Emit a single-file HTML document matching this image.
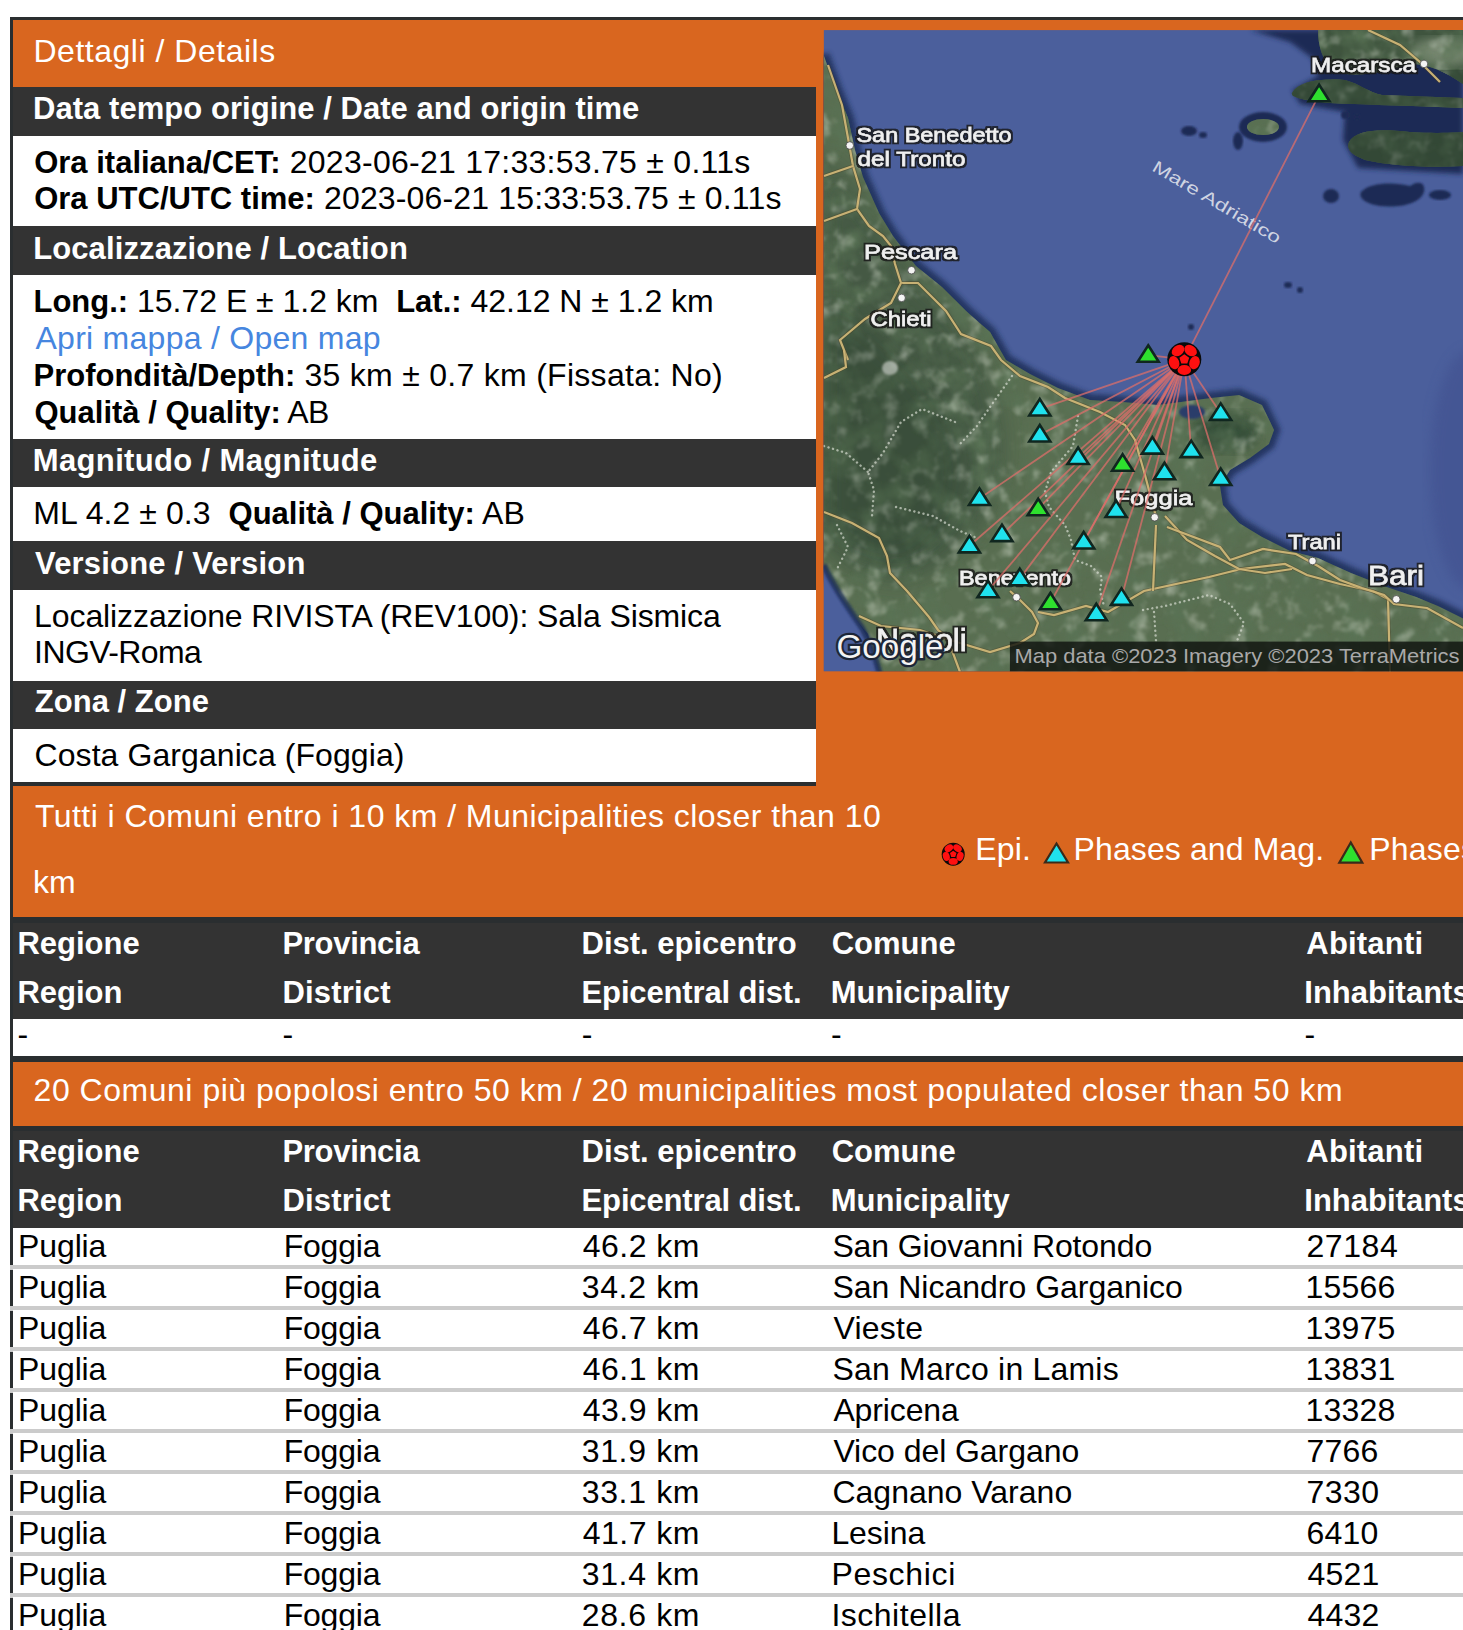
<!DOCTYPE html><html><head><meta charset="utf-8"><style>*{margin:0;padding:0}
html,body{width:1463px;height:1630px;overflow:hidden;background:#fff}
body{position:relative;font-family:"Liberation Sans",sans-serif}
div{position:absolute}
.t{white-space:pre;font-size:32px;line-height:32px}
</style></head><body>
<div style="left:10px;top:17px;width:1500px;height:1700px;background:#d9661f;border-left:3.5px solid #2a2e30;border-top:3.5px solid #2a2e30;box-sizing:border-box"></div>
<div style="left:13.0px;top:87.3px;width:802.5px;height:49.5px;background:#333333;"></div>
<div style="left:13.0px;top:136px;width:802.5px;height:90.6px;background:#fff;"></div>
<div style="left:13.0px;top:225.8px;width:802.5px;height:49.699999999999996px;background:#333333;"></div>
<div style="left:13.0px;top:274.7px;width:802.5px;height:164.70000000000002px;background:#fff;"></div>
<div style="left:13.0px;top:438.6px;width:802.5px;height:49.5px;background:#333333;"></div>
<div style="left:13.0px;top:487.3px;width:802.5px;height:54.4px;background:#fff;"></div>
<div style="left:13.0px;top:540.9px;width:802.5px;height:49.5px;background:#333333;"></div>
<div style="left:13.0px;top:589.6px;width:802.5px;height:91.7px;background:#fff;"></div>
<div style="left:13.0px;top:680.5px;width:802.5px;height:49.099999999999994px;background:#333333;"></div>
<div style="left:13.0px;top:728.8px;width:802.5px;height:54.3px;background:#fff;"></div>
<div style="left:13.0px;top:782.3px;width:802.5px;height:3.7px;background:#2a2e30;"></div>
<div style="left:13.0px;top:917.4px;width:1500px;height:102.3px;background:#333333;"></div>
<div style="left:13.0px;top:917.4px;width:1500px;height:5.8px;background:#2a2e30;"></div>
<div style="left:13.0px;top:1018.9px;width:1500px;height:37.9px;background:#fff;"></div>
<div style="left:13.0px;top:1056px;width:1500px;height:5.7px;background:#2a2e30;"></div>
<div style="left:13.0px;top:1125.5px;width:1500px;height:102.3px;background:#333333;"></div>
<div style="left:13.0px;top:1125.5px;width:1500px;height:5.8px;background:#2a2e30;"></div>
<div style="left:13.0px;top:1227.7px;width:1500px;height:41.8px;background:#fff;"></div>
<div style="left:10px;top:1265.0px;width:1500px;height:4.5px;background:#cbcbcb;"></div>
<div style="left:13.0px;top:1268.7px;width:1500px;height:41.8px;background:#fff;"></div>
<div style="left:10px;top:1306.0px;width:1500px;height:4.5px;background:#cbcbcb;"></div>
<div style="left:13.0px;top:1309.7px;width:1500px;height:41.8px;background:#fff;"></div>
<div style="left:10px;top:1347.0px;width:1500px;height:4.5px;background:#cbcbcb;"></div>
<div style="left:13.0px;top:1350.7px;width:1500px;height:41.8px;background:#fff;"></div>
<div style="left:10px;top:1388.0px;width:1500px;height:4.5px;background:#cbcbcb;"></div>
<div style="left:13.0px;top:1391.7px;width:1500px;height:41.8px;background:#fff;"></div>
<div style="left:10px;top:1429.0px;width:1500px;height:4.5px;background:#cbcbcb;"></div>
<div style="left:13.0px;top:1432.7px;width:1500px;height:41.8px;background:#fff;"></div>
<div style="left:10px;top:1470.0px;width:1500px;height:4.5px;background:#cbcbcb;"></div>
<div style="left:13.0px;top:1473.7px;width:1500px;height:41.8px;background:#fff;"></div>
<div style="left:10px;top:1511.0px;width:1500px;height:4.5px;background:#cbcbcb;"></div>
<div style="left:13.0px;top:1514.7px;width:1500px;height:41.8px;background:#fff;"></div>
<div style="left:10px;top:1552.0px;width:1500px;height:4.5px;background:#cbcbcb;"></div>
<div style="left:13.0px;top:1555.7px;width:1500px;height:41.8px;background:#fff;"></div>
<div style="left:10px;top:1593.0px;width:1500px;height:4.5px;background:#cbcbcb;"></div>
<div style="left:13.0px;top:1596.7px;width:1500px;height:41.8px;background:#fff;"></div>
<div style="left:10px;top:1634.0px;width:1500px;height:4.5px;background:#cbcbcb;"></div>
<div style="left:13.0px;top:1637.7px;width:1500px;height:41.8px;background:#fff;"></div>
<div style="left:10px;top:1675.0px;width:1500px;height:4.5px;background:#cbcbcb;"></div>
<svg style="position:absolute;left:0;top:0" width="1463" height="1630" viewBox="0 0 1463 1630">
<defs>
<clipPath id="mc"><rect x="823.6" y="30.1" width="646.4" height="641.1999999999999"/></clipPath>
<filter id="blur1"><feGaussianBlur stdDeviation="1.2"/></filter>
<filter id="blur2"><feGaussianBlur stdDeviation="2.5"/></filter>
<filter id="blur6"><feGaussianBlur stdDeviation="6"/></filter>
<filter id="blur12" x="-50%" y="-50%" width="200%" height="200%"><feGaussianBlur stdDeviation="12"/></filter>
<filter id="halo" x="-10%" y="-30%" width="120%" height="160%"><feMorphology in="SourceAlpha" operator="dilate" radius="1.7" result="d"/><feFlood flood-color="#161616" flood-opacity="0.85"/><feComposite in2="d" operator="in" result="h"/><feMerge><feMergeNode in="h"/><feMergeNode in="SourceGraphic"/></feMerge></filter>
<filter id="texd" x="0" y="0" width="100%" height="100%" filterUnits="userSpaceOnUse"><feTurbulence type="fractalNoise" baseFrequency="0.035" numOctaves="4" seed="7"/><feColorMatrix values="0 0 0 0 0.10  0 0 0 0 0.17  0 0 0 0 0.09  2.4 0 0 0 -1.0"/><feGaussianBlur stdDeviation="0.8"/></filter>
<filter id="texl" x="0" y="0" width="100%" height="100%" filterUnits="userSpaceOnUse"><feTurbulence type="fractalNoise" baseFrequency="0.06" numOctaves="3" seed="19"/><feColorMatrix values="0 0 0 0 0.72  0 0 0 0 0.76  0 0 0 0 0.66  0 1.4 0 0 -0.74"/><feGaussianBlur stdDeviation="1.2"/></filter>
<clipPath id="landclip"><polygon points="823.6,55 836,89 848,118 855,150 863,177 879,213 893,236 916,266 942,287 966,311 990,332 1006,360 1030,374 1058,388 1090,400 1123,402 1158,405 1181,402 1211,398 1239,395 1262,405 1274,430 1269,444 1250,458 1230,470 1220,486 1223,505 1239,523 1262,537 1290,551 1318,558 1351,573 1384,586 1416,597 1438,606 1470,622 1470,680 880,680 868,634 846,608 823.6,569"/><path d="M1318,30 L1463,30 L1463,84 C1445,72 1430,64 1410,64 C1390,70 1370,76 1345,74 C1325,70 1318,50 1318,30 Z"/><path d="M1292,93 C1298,82 1318,78 1345,80 C1360,84 1368,92 1382,95 L1463,98 L1463,108 C1420,106 1370,105 1330,103 C1310,101 1290,98 1292,93 Z"/><path d="M1349,142 C1355,130 1380,128 1410,132 C1440,134 1463,132 1463,132 L1463,166 C1430,168 1390,166 1365,160 C1352,155 1346,150 1349,142 Z"/><ellipse cx="1263" cy="127" rx="16" ry="8"/></clipPath>
</defs>
<g clip-path="url(#mc)">
<rect x="823.6" y="30.1" width="646.4" height="641.1999999999999" fill="#4b5f9c"/>
<ellipse cx="1470" cy="470" rx="40" ry="120" fill="#3f508e" opacity="0.55" filter="url(#blur6)"/>
<polygon points="823.6,55 836,89 848,118 855,150 863,177 879,213 893,236 916,266 942,287 966,311 990,332 1006,360 1030,374 1058,388 1090,400 1123,402 1158,405 1181,402 1211,398 1239,395 1262,405 1274,430 1269,444 1250,458 1230,470 1220,486 1223,505 1239,523 1262,537 1290,551 1318,558 1351,573 1384,586 1416,597 1438,606 1470,622 1470,680 880,680 868,634 846,608 823.6,569" fill="#1f2d58" stroke="#1f2d58" stroke-width="12" filter="url(#blur2)" opacity="0.85"/>
<path d="M1250,30 L1290,42 L1312,58 L1318,76 L1292,90 L1300,104 L1345,112 L1343,140 L1358,168 L1463,174 L1463,30 Z" fill="#1e2b55" filter="url(#blur2)"/>
<ellipse cx="1263" cy="127" rx="24" ry="15" fill="#1e2b55" filter="url(#blur1)"/>
<ellipse cx="1238" cy="141" rx="5" ry="9" fill="#1e2b55" filter="url(#blur1)"/>
<ellipse cx="1345" cy="115" rx="4" ry="4" fill="#1e2b55" filter="url(#blur1)"/>
<ellipse cx="1357" cy="117" rx="3" ry="3" fill="#1e2b55" filter="url(#blur1)"/>
<ellipse cx="1331" cy="196" rx="8" ry="7" fill="#1e2b55" filter="url(#blur1)"/>
<ellipse cx="1440" cy="195" rx="11" ry="5" fill="#1e2b55" filter="url(#blur1)"/>
<ellipse cx="1288" cy="285" rx="4" ry="3" fill="#1e2b55" filter="url(#blur1)"/>
<ellipse cx="1300" cy="290" rx="3" ry="3" fill="#1e2b55" filter="url(#blur1)"/>
<ellipse cx="1191" cy="327" rx="3" ry="3" fill="#1e2b55" filter="url(#blur1)"/>
<ellipse cx="1189" cy="131" rx="8" ry="5" fill="#1e2b55" filter="url(#blur1)"/>
<ellipse cx="1203" cy="135" rx="4" ry="3" fill="#1e2b55" filter="url(#blur1)"/>
<path d="M1361,192 C1370,182 1395,182 1410,186 C1418,180 1426,182 1424,192 C1420,204 1400,208 1380,206 C1366,204 1358,198 1361,192 Z" fill="#1e2b55" filter="url(#blur1)"/>
<g clip-path="url(#landclip)">
<rect x="823.6" y="30.1" width="646.4" height="641.1999999999999" fill="#596e51"/>
<path d="M823.6,150 C860,200 900,260 940,300 C990,350 1010,420 1000,480 C985,530 950,570 900,580 C860,575 840,560 823.6,540 Z" fill="#34493a" opacity="0.55" filter="url(#blur12)"/>
<ellipse cx="1225" cy="432" rx="34" ry="20" fill="#2a4530" opacity="0.7" filter="url(#blur6)"/>
<rect x="1290" y="30" width="180" height="150" fill="#2e4232" opacity="0.6"/>
<ellipse cx="1445" cy="52" rx="36" ry="14" fill="#9aa890" opacity="0.6" filter="url(#blur6)"/>
<rect x="823.6" y="30.1" width="646.4" height="641.1999999999999" filter="url(#texd)"/>
<rect x="823.6" y="30.1" width="646.4" height="641.1999999999999" filter="url(#texl)"/>
<ellipse cx="890" cy="368" rx="8" ry="7" fill="#d8dcd4" opacity="0.8" filter="url(#blur1)"/>
<rect x="1290" y="70" width="180" height="110" fill="#24382a" opacity="0.4"/>
<path d="M823.6,300 C870,330 920,380 950,430 C970,480 950,540 900,560 C860,560 830,540 823.6,520 Z" fill="#1f3322" opacity="0.25" filter="url(#blur12)"/>
</g>
<ellipse cx="1192" cy="412" rx="13" ry="7" fill="#2b3e6a" filter="url(#blur1)"/>
<path d="M823.6,565 C835,590 850,610 862,628 C872,645 876,660 880,675 L823.6,675 Z" fill="#4b5f9c"/>
<path d="M823.6,565 C835,590 850,610 862,628 C872,645 876,660 880,675" fill="none" stroke="#1f2d58" stroke-width="6" filter="url(#blur1)" opacity="0.8"/>
<path d="M828,65 L842,105 L848,138 L853,166 L860,189 L857,209 L869,226 L883,236 L891,246 L895,264 L901,283 L918,283 L946,311 L961,334 L991,346 L1001,360 L1020,376 L1048,387 L1065,398 L1100,412 L1125,425 L1135,440 L1145,475 L1156,517" fill="none" stroke="#4a3d20" stroke-width="3.8" opacity="0.35"/>
<path d="M828,65 L842,105 L848,138 L853,166 L860,189 L857,209 L869,226 L883,236 L891,246 L895,264 L901,283 L918,283 L946,311 L961,334 L991,346 L1001,360 L1020,376 L1048,387 L1065,398 L1100,412 L1125,425 L1135,440 L1145,475 L1156,517" fill="none" stroke="#cfb677" stroke-width="2.2" opacity="0.95"/>
<path d="M853,166 L824,176" fill="none" stroke="#4a3d20" stroke-width="3.8" opacity="0.35"/>
<path d="M853,166 L824,176" fill="none" stroke="#cfb677" stroke-width="2.2" opacity="0.95"/>
<path d="M857,209 L824,221" fill="none" stroke="#4a3d20" stroke-width="3.8" opacity="0.35"/>
<path d="M857,209 L824,221" fill="none" stroke="#cfb677" stroke-width="2.2" opacity="0.95"/>
<path d="M901,283 L891,303 L865,319 L840,340 L848,360" fill="none" stroke="#4a3d20" stroke-width="3.8" opacity="0.35"/>
<path d="M901,283 L891,303 L865,319 L840,340 L848,360" fill="none" stroke="#cfb677" stroke-width="2.2" opacity="0.95"/>
<path d="M844,350 L846,367 L824,378" fill="none" stroke="#4a3d20" stroke-width="3.8" opacity="0.35"/>
<path d="M844,350 L846,367 L824,378" fill="none" stroke="#cfb677" stroke-width="2.2" opacity="0.95"/>
<path d="M824,512 L852,523 L879,538 L887,556 L890,573 L907,591 L929,617 L938,630 L947,637 L960,672" fill="none" stroke="#4a3d20" stroke-width="3.8" opacity="0.35"/>
<path d="M824,512 L852,523 L879,538 L887,556 L890,573 L907,591 L929,617 L938,630 L947,637 L960,672" fill="none" stroke="#cfb677" stroke-width="2.2" opacity="0.95"/>
<path d="M859,616 L881,626 L920,630 L950,640 L990,652 L1020,643 L1034,634 L1038,623 L1032,612 L1021,601 L1010,591" fill="none" stroke="#4a3d20" stroke-width="3.8" opacity="0.35"/>
<path d="M859,616 L881,626 L920,630 L950,640 L990,652 L1020,643 L1034,634 L1038,623 L1032,612 L1021,601 L1010,591" fill="none" stroke="#cfb677" stroke-width="2.2" opacity="0.95"/>
<path d="M1038,612 L1054,615 L1086,606 L1108,612 L1144,591 L1176,584 L1209,577 L1241,569 L1285,564 L1307,575 L1340,584 L1373,591 L1388,599 L1390,672" fill="none" stroke="#4a3d20" stroke-width="3.8" opacity="0.35"/>
<path d="M1038,612 L1054,615 L1086,606 L1108,612 L1144,591 L1176,584 L1209,577 L1241,569 L1285,564 L1307,575 L1340,584 L1373,591 L1388,599 L1390,672" fill="none" stroke="#cfb677" stroke-width="2.2" opacity="0.95"/>
<path d="M1156,525 L1153,591" fill="none" stroke="#4a3d20" stroke-width="3.8" opacity="0.35"/>
<path d="M1156,525 L1153,591" fill="none" stroke="#cfb677" stroke-width="2.2" opacity="0.95"/>
<path d="M1165,516 L1187,540 L1215,556 L1239,569 L1265,573 L1292,569" fill="none" stroke="#4a3d20" stroke-width="3.8" opacity="0.35"/>
<path d="M1165,516 L1187,540 L1215,556 L1239,569 L1265,573 L1292,569" fill="none" stroke="#cfb677" stroke-width="2.2" opacity="0.95"/>
<path d="M1167,527 L1220,547 L1230,560 L1263,549 L1296,554 L1318,566 L1340,580 L1362,588 L1384,595 L1394,604 L1427,608 L1463,628" fill="none" stroke="#4a3d20" stroke-width="3.8" opacity="0.35"/>
<path d="M1167,527 L1220,547 L1230,560 L1263,549 L1296,554 L1318,566 L1340,580 L1362,588 L1384,595 L1394,604 L1427,608 L1463,628" fill="none" stroke="#cfb677" stroke-width="2.2" opacity="0.95"/>
<path d="M1368,30 L1400,45 L1420,62 L1430,72 L1440,82" fill="none" stroke="#4a3d20" stroke-width="3.8" opacity="0.35"/>
<path d="M1368,30 L1400,45 L1420,62 L1430,72 L1440,82" fill="none" stroke="#cfb677" stroke-width="2.2" opacity="0.95"/>
<path d="M1012,376 L990,407 L977,426 L960,444" fill="none" stroke="#dfe3d8" stroke-width="2.4" stroke-dasharray="0.1,4.6" stroke-linecap="round" opacity="0.65"/>
<path d="M955,422 L922,409 L901,422 L883,453 L868,472 L874,490 L872,516" fill="none" stroke="#dfe3d8" stroke-width="2.4" stroke-dasharray="0.1,4.6" stroke-linecap="round" opacity="0.65"/>
<path d="M824,446 L846,453 L868,472" fill="none" stroke="#dfe3d8" stroke-width="2.4" stroke-dasharray="0.1,4.6" stroke-linecap="round" opacity="0.65"/>
<path d="M896,507 L933,516 L960,531 L977,538" fill="none" stroke="#dfe3d8" stroke-width="2.4" stroke-dasharray="0.1,4.6" stroke-linecap="round" opacity="0.65"/>
<path d="M1078,416 L1073,446 L1051,472 L1045,492 L1049,507 L1065,525 L1071,540 L1075,560 L1091,566 L1102,577 L1100,591 L1104,606" fill="none" stroke="#dfe3d8" stroke-width="2.4" stroke-dasharray="0.1,4.6" stroke-linecap="round" opacity="0.65"/>
<path d="M837,525 L848,547 L837,569" fill="none" stroke="#dfe3d8" stroke-width="2.4" stroke-dasharray="0.1,4.6" stroke-linecap="round" opacity="0.65"/>
<path d="M1143,610 L1165,606 L1209,595 L1230,604 L1244,623 L1237,641" fill="none" stroke="#dfe3d8" stroke-width="2.4" stroke-dasharray="0.1,4.6" stroke-linecap="round" opacity="0.65"/>
<path d="M1154,612 L1156,641" fill="none" stroke="#dfe3d8" stroke-width="2.4" stroke-dasharray="0.1,4.6" stroke-linecap="round" opacity="0.65"/>
<circle cx="849.8" cy="145.5" r="3.8" fill="#f4f4f4" stroke="#444" stroke-width="0.8"/>
<circle cx="911.5" cy="270.2" r="3.8" fill="#f4f4f4" stroke="#444" stroke-width="0.8"/>
<circle cx="901.6" cy="297.9" r="3.8" fill="#f4f4f4" stroke="#444" stroke-width="0.8"/>
<circle cx="1424" cy="63.9" r="3.8" fill="#f4f4f4" stroke="#444" stroke-width="0.8"/>
<circle cx="1154.7" cy="517.3" r="3.8" fill="#f4f4f4" stroke="#444" stroke-width="0.8"/>
<circle cx="1312.5" cy="561" r="3.8" fill="#f4f4f4" stroke="#444" stroke-width="0.8"/>
<circle cx="1396.3" cy="599.3" r="3.8" fill="#f4f4f4" stroke="#444" stroke-width="0.8"/>
<circle cx="1016.5" cy="597.2" r="3.8" fill="#f4f4f4" stroke="#444" stroke-width="0.8"/>
<text x="856.5" y="141.5" font-size="21" font-weight="normal" fill="#f0f0f0" stroke="#f0f0f0" stroke-width="0.5" filter="url(#halo)" textLength="155" lengthAdjust="spacingAndGlyphs">San Benedetto</text>
<text x="857.5" y="165.6" font-size="21" font-weight="normal" fill="#f0f0f0" stroke="#f0f0f0" stroke-width="0.5" filter="url(#halo)" textLength="108" lengthAdjust="spacingAndGlyphs">del Tronto</text>
<text x="864" y="258.6" font-size="21" font-weight="normal" fill="#f0f0f0" stroke="#f0f0f0" stroke-width="0.5" filter="url(#halo)" textLength="93" lengthAdjust="spacingAndGlyphs">Pescara</text>
<text x="870.5" y="326.4" font-size="21" font-weight="normal" fill="#f0f0f0" stroke="#f0f0f0" stroke-width="0.5" filter="url(#halo)" textLength="61" lengthAdjust="spacingAndGlyphs">Chieti</text>
<text x="1311" y="71.6" font-size="21" font-weight="normal" fill="#f0f0f0" stroke="#f0f0f0" stroke-width="0.5" filter="url(#halo)" textLength="105" lengthAdjust="spacingAndGlyphs">Macarsca</text>
<text x="1114.5" y="504.5" font-size="21" font-weight="normal" fill="#f0f0f0" stroke="#f0f0f0" stroke-width="0.5" filter="url(#halo)" textLength="78" lengthAdjust="spacingAndGlyphs">Foggia</text>
<text x="1288" y="549" font-size="21" font-weight="normal" fill="#f0f0f0" stroke="#f0f0f0" stroke-width="0.5" filter="url(#halo)" textLength="53" lengthAdjust="spacingAndGlyphs">Trani</text>
<text x="1368" y="585.1" font-size="28" font-weight="normal" fill="#f0f0f0" stroke="#f0f0f0" stroke-width="0.5" filter="url(#halo)" textLength="56" lengthAdjust="spacingAndGlyphs">Bari</text>
<text x="959" y="585.1" font-size="19.5" font-weight="normal" fill="#f0f0f0" stroke="#f0f0f0" stroke-width="0.5" filter="url(#halo)" textLength="112" lengthAdjust="spacingAndGlyphs">Benevento</text>
<text x="876" y="651.4" font-size="31" font-weight="normal" fill="#f0f0f0" stroke="#f0f0f0" stroke-width="0.5" filter="url(#halo)" textLength="91" lengthAdjust="spacingAndGlyphs">Napoli</text>
<text x="1151" y="170" font-size="17" fill="#cfd4e2" transform="rotate(30.6 1151 170)" textLength="146" lengthAdjust="spacingAndGlyphs">Mare Adriatico</text>
<line x1="1184.3" y1="359.3" x2="1039.8" y2="408.9" stroke="#dc6e6a" stroke-width="1.8" opacity="0.75"/>
<line x1="1184.3" y1="359.3" x2="1039.8" y2="434.9" stroke="#dc6e6a" stroke-width="1.8" opacity="0.75"/>
<line x1="1184.3" y1="359.3" x2="1078.1" y2="457.4" stroke="#dc6e6a" stroke-width="1.8" opacity="0.75"/>
<line x1="1184.3" y1="359.3" x2="1152.4" y2="447.0" stroke="#dc6e6a" stroke-width="1.8" opacity="0.75"/>
<line x1="1184.3" y1="359.3" x2="1164.5" y2="472.6" stroke="#dc6e6a" stroke-width="1.8" opacity="0.75"/>
<line x1="1184.3" y1="359.3" x2="1191.2" y2="450.5" stroke="#dc6e6a" stroke-width="1.8" opacity="0.75"/>
<line x1="1184.3" y1="359.3" x2="1220.7" y2="413.3" stroke="#dc6e6a" stroke-width="1.8" opacity="0.75"/>
<line x1="1184.3" y1="359.3" x2="1220.7" y2="478.4" stroke="#dc6e6a" stroke-width="1.8" opacity="0.75"/>
<line x1="1184.3" y1="359.3" x2="979.5" y2="498.4" stroke="#dc6e6a" stroke-width="1.8" opacity="0.75"/>
<line x1="1184.3" y1="359.3" x2="1002.0" y2="534.5" stroke="#dc6e6a" stroke-width="1.8" opacity="0.75"/>
<line x1="1184.3" y1="359.3" x2="969.4" y2="545.8" stroke="#dc6e6a" stroke-width="1.8" opacity="0.75"/>
<line x1="1184.3" y1="359.3" x2="1083.7" y2="541.9" stroke="#dc6e6a" stroke-width="1.8" opacity="0.75"/>
<line x1="1184.3" y1="359.3" x2="1116.1" y2="510.4" stroke="#dc6e6a" stroke-width="1.8" opacity="0.75"/>
<line x1="1184.3" y1="359.3" x2="1019.8" y2="578.6" stroke="#dc6e6a" stroke-width="1.8" opacity="0.75"/>
<line x1="1184.3" y1="359.3" x2="988.0" y2="590.7" stroke="#dc6e6a" stroke-width="1.8" opacity="0.75"/>
<line x1="1184.3" y1="359.3" x2="1096.3" y2="613.6" stroke="#dc6e6a" stroke-width="1.8" opacity="0.75"/>
<line x1="1184.3" y1="359.3" x2="1121.5" y2="598.3" stroke="#dc6e6a" stroke-width="1.8" opacity="0.75"/>
<line x1="1184.3" y1="359.3" x2="1148.2" y2="355.2" stroke="#dc6e6a" stroke-width="1.8" opacity="0.75"/>
<line x1="1184.3" y1="359.3" x2="1122.6" y2="464.1" stroke="#dc6e6a" stroke-width="1.8" opacity="0.75"/>
<line x1="1184.3" y1="359.3" x2="1038.2" y2="508.6" stroke="#dc6e6a" stroke-width="1.8" opacity="0.75"/>
<line x1="1184.3" y1="359.3" x2="1050.4" y2="602.7" stroke="#dc6e6a" stroke-width="1.8" opacity="0.75"/>
<line x1="1184.3" y1="359.3" x2="1319.1" y2="94.6" stroke="#dc6e6a" stroke-width="1.8" opacity="0.75"/>
<polygon points="1039.8,399.0 1050.3,415.5 1029.3,415.5" fill="#1fe2ee" stroke="#10261f" stroke-width="2.6" stroke-linejoin="miter"/>
<polygon points="1039.8,425.0 1050.3,441.5 1029.3,441.5" fill="#1fe2ee" stroke="#10261f" stroke-width="2.6" stroke-linejoin="miter"/>
<polygon points="1078.1,447.5 1088.6,464.0 1067.6,464.0" fill="#1fe2ee" stroke="#10261f" stroke-width="2.6" stroke-linejoin="miter"/>
<polygon points="1152.4,437.1 1162.9,453.6 1141.9,453.6" fill="#1fe2ee" stroke="#10261f" stroke-width="2.6" stroke-linejoin="miter"/>
<polygon points="1164.5,462.7 1175.0,479.2 1154.0,479.2" fill="#1fe2ee" stroke="#10261f" stroke-width="2.6" stroke-linejoin="miter"/>
<polygon points="1191.2,440.6 1201.7,457.1 1180.7,457.1" fill="#1fe2ee" stroke="#10261f" stroke-width="2.6" stroke-linejoin="miter"/>
<polygon points="1220.7,403.4 1231.2,419.9 1210.2,419.9" fill="#1fe2ee" stroke="#10261f" stroke-width="2.6" stroke-linejoin="miter"/>
<polygon points="1220.7,468.5 1231.2,485.0 1210.2,485.0" fill="#1fe2ee" stroke="#10261f" stroke-width="2.6" stroke-linejoin="miter"/>
<polygon points="979.5,488.5 990.0,505.0 969.0,505.0" fill="#1fe2ee" stroke="#10261f" stroke-width="2.6" stroke-linejoin="miter"/>
<polygon points="1002.0,524.6 1012.5,541.1 991.5,541.1" fill="#1fe2ee" stroke="#10261f" stroke-width="2.6" stroke-linejoin="miter"/>
<polygon points="969.4,535.9 979.9,552.4 958.9,552.4" fill="#1fe2ee" stroke="#10261f" stroke-width="2.6" stroke-linejoin="miter"/>
<polygon points="1083.7,532.0 1094.2,548.5 1073.2,548.5" fill="#1fe2ee" stroke="#10261f" stroke-width="2.6" stroke-linejoin="miter"/>
<polygon points="1116.1,500.5 1126.6,517.0 1105.6,517.0" fill="#1fe2ee" stroke="#10261f" stroke-width="2.6" stroke-linejoin="miter"/>
<polygon points="1019.8,568.7 1030.3,585.2 1009.3,585.2" fill="#1fe2ee" stroke="#10261f" stroke-width="2.6" stroke-linejoin="miter"/>
<polygon points="988.0,580.8 998.5,597.3 977.5,597.3" fill="#1fe2ee" stroke="#10261f" stroke-width="2.6" stroke-linejoin="miter"/>
<polygon points="1096.3,603.7 1106.8,620.2 1085.8,620.2" fill="#1fe2ee" stroke="#10261f" stroke-width="2.6" stroke-linejoin="miter"/>
<polygon points="1121.5,588.4 1132.0,604.9 1111.0,604.9" fill="#1fe2ee" stroke="#10261f" stroke-width="2.6" stroke-linejoin="miter"/>
<polygon points="1148.2,345.3 1158.7,361.8 1137.7,361.8" fill="#2ee02e" stroke="#10261f" stroke-width="2.6" stroke-linejoin="miter"/>
<polygon points="1122.6,454.2 1133.1,470.7 1112.1,470.7" fill="#2ee02e" stroke="#10261f" stroke-width="2.6" stroke-linejoin="miter"/>
<polygon points="1038.2,498.7 1048.7,515.2 1027.7,515.2" fill="#2ee02e" stroke="#10261f" stroke-width="2.6" stroke-linejoin="miter"/>
<polygon points="1050.4,592.8 1060.9,609.3 1039.9,609.3" fill="#2ee02e" stroke="#10261f" stroke-width="2.6" stroke-linejoin="miter"/>
<polygon points="1319.1,84.7 1329.6,101.2 1308.6,101.2" fill="#2ee02e" stroke="#10261f" stroke-width="2.6" stroke-linejoin="miter"/>
<circle cx="1184.3" cy="359.3" r="17" fill="#0a0a0a"/><polygon points="1184.3,354.2 1179.4,357.7 1181.3,363.4 1187.3,363.4 1189.2,357.7" fill="#ff1010"/><ellipse cx="1184.3" cy="370.0" rx="6.8" ry="5.1" transform="rotate(180 1184.3 370.0)" fill="#ff1010"/><ellipse cx="1174.1" cy="362.6" rx="6.8" ry="5.1" transform="rotate(252 1174.1 362.6)" fill="#ff1010"/><ellipse cx="1178.0" cy="350.6" rx="6.8" ry="5.1" transform="rotate(324 1178.0 350.6)" fill="#ff1010"/><ellipse cx="1190.6" cy="350.6" rx="6.8" ry="5.1" transform="rotate(396 1190.6 350.6)" fill="#ff1010"/><ellipse cx="1194.5" cy="362.6" rx="6.8" ry="5.1" transform="rotate(468 1194.5 362.6)" fill="#ff1010"/>
<text x="836.5" y="658" font-size="33" font-weight="normal" fill="#f4f4f4" stroke="#1d2638" stroke-width="4.5" paint-order="stroke" textLength="107" lengthAdjust="spacingAndGlyphs">Google</text>
<rect x="1009.9" y="641.6" width="470" height="32" fill="#0d100d" opacity="0.8"/>
<text x="1014.5" y="663.4" font-size="21" fill="#a9a9a9" textLength="445" lengthAdjust="spacingAndGlyphs">Map data ©2023 Imagery ©2023 TerraMetrics</text>
</g>
<circle cx="953.2" cy="854.2" r="11.5" fill="#0a0a0a"/><polygon points="953.2,850.8 949.9,853.1 951.2,857.0 955.2,857.0 956.5,853.1" fill="#ff1010"/><ellipse cx="953.2" cy="861.4" rx="4.6" ry="3.4" transform="rotate(180 953.2 861.4)" fill="#ff1010"/><ellipse cx="946.3" cy="856.4" rx="4.6" ry="3.4" transform="rotate(252 946.3 856.4)" fill="#ff1010"/><ellipse cx="948.9" cy="848.3" rx="4.6" ry="3.4" transform="rotate(324 948.9 848.3)" fill="#ff1010"/><ellipse cx="957.5" cy="848.3" rx="4.6" ry="3.4" transform="rotate(396 957.5 848.3)" fill="#ff1010"/><ellipse cx="960.1" cy="856.4" rx="4.6" ry="3.4" transform="rotate(468 960.1 856.4)" fill="#ff1010"/>
<polygon points="1056.5,843.5 1068,862.5 1045,862.5" fill="#1fe2ee" stroke="#3a2a1a" stroke-width="2.2"/>
<polygon points="1350.8,842.5 1362.3,862.7 1339.3,862.7" fill="#2ee02e" stroke="#3a2a1a" stroke-width="2.2"/>
</svg>
<div class="t" style="left:33.50px;top:35.36px;color:#fff"><span style="letter-spacing:0.513px">Dettagli / Details</span></div>
<div class="t" style="left:33.00px;top:91.96px;color:#fff"><span style="font-weight:bold;font-size:31px;letter-spacing:0.044px">Data tempo origine / Date and origin time</span></div>
<div class="t" style="left:34.20px;top:145.56px;color:#000"><span style="font-weight:bold;font-size:31px">Ora italiana/CET:</span><span style="letter-spacing:0.266px"> 2023-06-21 17:33:53.75 ± 0.11s</span></div>
<div class="t" style="left:34.20px;top:182.26px;color:#000"><span style="font-weight:bold;font-size:31px">Ora UTC/UTC time:</span><span style="letter-spacing:0.156px"> 2023-06-21 15:33:53.75 ± 0.11s</span></div>
<div class="t" style="left:33.20px;top:231.86px;color:#fff"><span style="font-weight:bold;font-size:31px;letter-spacing:0.108px">Localizzazione / Location</span></div>
<div class="t" style="left:33.50px;top:285.16px;color:#000"><span style="font-weight:bold;font-size:31px">Long.:</span><span style="letter-spacing:-0.019px"> 15.72 E ± 1.2 km  </span><span style="font-weight:bold;font-size:31px">Lat.:</span><span style="letter-spacing:-0.019px"> 42.12 N ± 1.2 km</span></div>
<div class="t" style="left:35.50px;top:321.76px;color:#4686df"><span style="letter-spacing:0.263px">Apri mappa / Open map</span></div>
<div class="t" style="left:33.50px;top:358.56px;color:#000"><span style="font-weight:bold;font-size:31px">Profondità/Depth:</span><span style="letter-spacing:0.288px"> 35 km ± 0.7 km (Fissata: No)</span></div>
<div class="t" style="left:34.50px;top:395.56px;color:#000"><span style="font-weight:bold;font-size:31px">Qualità / Quality:</span><span style="letter-spacing:-0.600px"> AB</span></div>
<div class="t" style="left:32.80px;top:444.46px;color:#fff"><span style="font-weight:bold;font-size:31px;letter-spacing:0.352px">Magnitudo / Magnitude</span></div>
<div class="t" style="left:33.30px;top:497.46px;color:#000"><span style="letter-spacing:0.069px">ML 4.2 ± 0.3  </span><span style="font-weight:bold;font-size:31px">Qualità / Quality:</span><span style="letter-spacing:0.069px"> AB</span></div>
<div class="t" style="left:35.00px;top:546.66px;color:#fff"><span style="font-weight:bold;font-size:31px;letter-spacing:0.192px">Versione / Version</span></div>
<div class="t" style="left:34.10px;top:599.56px;color:#000"><span style="letter-spacing:-0.103px">Localizzazione RIVISTA (REV100): Sala Sismica</span></div>
<div class="t" style="left:34.10px;top:636.26px;color:#000"><span style="letter-spacing:-0.600px">INGV-Roma</span></div>
<div class="t" style="left:34.80px;top:685.46px;color:#fff"><span style="font-weight:bold;font-size:31px;letter-spacing:0.020px">Zona / Zone</span></div>
<div class="t" style="left:34.50px;top:738.66px;color:#000"><span style="letter-spacing:0.078px">Costa Garganica (Foggia)</span></div>
<div class="t" style="left:34.90px;top:800.36px;color:#fff"><span style="letter-spacing:0.459px">Tutti i Comuni entro i 10 km / Municipalities closer than 10</span></div>
<div class="t" style="left:32.90px;top:865.66px;color:#fff"><span style="letter-spacing:0.200px">km</span></div>
<div class="t" style="left:975.20px;top:833.46px;color:#fff"><span style="letter-spacing:0.200px">Epi.</span></div>
<div class="t" style="left:1073.60px;top:833.46px;color:#fff"><span style="letter-spacing:0.103px">Phases and Mag.</span></div>
<div class="t" style="left:1369.30px;top:833.46px;color:#fff"><span style="letter-spacing:0.200px">Phases only</span></div>
<div class="t" style="left:17.40px;top:927.36px;color:#fff"><span style="font-weight:bold;font-size:31px;letter-spacing:0.000px">Regione</span></div>
<div class="t" style="left:17.40px;top:976.36px;color:#fff"><span style="font-weight:bold;font-size:31px;letter-spacing:0.000px">Region</span></div>
<div class="t" style="left:282.40px;top:927.36px;color:#fff"><span style="font-weight:bold;font-size:31px;letter-spacing:-0.290px">Provincia</span></div>
<div class="t" style="left:282.40px;top:976.36px;color:#fff"><span style="font-weight:bold;font-size:31px;letter-spacing:0.203px">District</span></div>
<div class="t" style="left:581.60px;top:927.36px;color:#fff"><span style="font-weight:bold;font-size:31px;letter-spacing:-0.013px">Dist. epicentro</span></div>
<div class="t" style="left:581.60px;top:976.36px;color:#fff"><span style="font-weight:bold;font-size:31px;letter-spacing:-0.154px">Epicentral dist.</span></div>
<div class="t" style="left:831.70px;top:927.36px;color:#fff"><span style="font-weight:bold;font-size:31px;letter-spacing:0.000px">Comune</span></div>
<div class="t" style="left:830.70px;top:976.36px;color:#fff"><span style="font-weight:bold;font-size:31px;letter-spacing:0.000px">Municipality</span></div>
<div class="t" style="left:1306.30px;top:927.36px;color:#fff"><span style="font-weight:bold;font-size:31px;letter-spacing:0.192px">Abitanti</span></div>
<div class="t" style="left:1304.30px;top:976.36px;color:#fff"><span style="font-weight:bold;font-size:31px;letter-spacing:0.000px">Inhabitants</span></div>
<div class="t" style="left:17.60px;top:1018.16px;color:#000"><span style="letter-spacing:0.200px">-</span></div>
<div class="t" style="left:282.60px;top:1018.16px;color:#000"><span style="letter-spacing:0.200px">-</span></div>
<div class="t" style="left:581.80px;top:1018.16px;color:#000"><span style="letter-spacing:0.200px">-</span></div>
<div class="t" style="left:830.90px;top:1018.16px;color:#000"><span style="letter-spacing:0.200px">-</span></div>
<div class="t" style="left:1304.50px;top:1018.16px;color:#000"><span style="letter-spacing:0.200px">-</span></div>
<div class="t" style="left:33.60px;top:1074.06px;color:#fff"><span style="letter-spacing:0.515px">20 Comuni più popolosi entro 50 km / 20 municipalities most populated closer than 50 km</span></div>
<div class="t" style="left:17.40px;top:1135.46px;color:#fff"><span style="font-weight:bold;font-size:31px;letter-spacing:0.000px">Regione</span></div>
<div class="t" style="left:17.40px;top:1184.46px;color:#fff"><span style="font-weight:bold;font-size:31px;letter-spacing:0.000px">Region</span></div>
<div class="t" style="left:282.40px;top:1135.46px;color:#fff"><span style="font-weight:bold;font-size:31px;letter-spacing:-0.290px">Provincia</span></div>
<div class="t" style="left:282.40px;top:1184.46px;color:#fff"><span style="font-weight:bold;font-size:31px;letter-spacing:0.203px">District</span></div>
<div class="t" style="left:581.60px;top:1135.46px;color:#fff"><span style="font-weight:bold;font-size:31px;letter-spacing:-0.013px">Dist. epicentro</span></div>
<div class="t" style="left:581.60px;top:1184.46px;color:#fff"><span style="font-weight:bold;font-size:31px;letter-spacing:-0.154px">Epicentral dist.</span></div>
<div class="t" style="left:831.70px;top:1135.46px;color:#fff"><span style="font-weight:bold;font-size:31px;letter-spacing:0.000px">Comune</span></div>
<div class="t" style="left:830.70px;top:1184.46px;color:#fff"><span style="font-weight:bold;font-size:31px;letter-spacing:0.000px">Municipality</span></div>
<div class="t" style="left:1306.30px;top:1135.46px;color:#fff"><span style="font-weight:bold;font-size:31px;letter-spacing:0.192px">Abitanti</span></div>
<div class="t" style="left:1304.30px;top:1184.46px;color:#fff"><span style="font-weight:bold;font-size:31px;letter-spacing:0.000px">Inhabitants</span></div>
<div class="t" style="left:18.10px;top:1229.66px;color:#000"><span style="letter-spacing:-0.131px">Puglia</span></div>
<div class="t" style="left:283.70px;top:1229.66px;color:#000"><span style="letter-spacing:-0.209px">Foggia</span></div>
<div class="t" style="left:582.70px;top:1229.66px;color:#000"><span style="letter-spacing:0.488px">46.2 km</span></div>
<div class="t" style="left:832.40px;top:1229.66px;color:#000"><span style="letter-spacing:-0.116px">San Giovanni Rotondo</span></div>
<div class="t" style="left:1306.50px;top:1229.66px;color:#000"><span style="letter-spacing:0.578px">27184</span></div>
<div class="t" style="left:18.10px;top:1270.66px;color:#000"><span style="letter-spacing:-0.131px">Puglia</span></div>
<div class="t" style="left:283.70px;top:1270.66px;color:#000"><span style="letter-spacing:-0.209px">Foggia</span></div>
<div class="t" style="left:581.70px;top:1270.66px;color:#000"><span style="letter-spacing:0.655px">34.2 km</span></div>
<div class="t" style="left:832.40px;top:1270.66px;color:#000"><span style="letter-spacing:-0.001px">San Nicandro Garganico</span></div>
<div class="t" style="left:1305.50px;top:1270.66px;color:#000"><span style="letter-spacing:0.200px">15566</span></div>
<div class="t" style="left:18.10px;top:1311.66px;color:#000"><span style="letter-spacing:-0.131px">Puglia</span></div>
<div class="t" style="left:283.70px;top:1311.66px;color:#000"><span style="letter-spacing:-0.209px">Foggia</span></div>
<div class="t" style="left:582.70px;top:1311.66px;color:#000"><span style="letter-spacing:0.488px">46.7 km</span></div>
<div class="t" style="left:833.40px;top:1311.66px;color:#000"><span style="letter-spacing:0.248px">Vieste</span></div>
<div class="t" style="left:1305.50px;top:1311.66px;color:#000"><span style="letter-spacing:0.200px">13975</span></div>
<div class="t" style="left:18.10px;top:1352.66px;color:#000"><span style="letter-spacing:-0.131px">Puglia</span></div>
<div class="t" style="left:283.70px;top:1352.66px;color:#000"><span style="letter-spacing:-0.209px">Foggia</span></div>
<div class="t" style="left:582.70px;top:1352.66px;color:#000"><span style="letter-spacing:0.488px">46.1 km</span></div>
<div class="t" style="left:832.40px;top:1352.66px;color:#000"><span style="letter-spacing:0.207px">San Marco in Lamis</span></div>
<div class="t" style="left:1305.50px;top:1352.66px;color:#000"><span style="letter-spacing:0.200px">13831</span></div>
<div class="t" style="left:18.10px;top:1393.66px;color:#000"><span style="letter-spacing:-0.131px">Puglia</span></div>
<div class="t" style="left:283.70px;top:1393.66px;color:#000"><span style="letter-spacing:-0.209px">Foggia</span></div>
<div class="t" style="left:582.70px;top:1393.66px;color:#000"><span style="letter-spacing:0.488px">43.9 km</span></div>
<div class="t" style="left:833.40px;top:1393.66px;color:#000"><span style="letter-spacing:-0.129px">Apricena</span></div>
<div class="t" style="left:1305.50px;top:1393.66px;color:#000"><span style="letter-spacing:0.200px">13328</span></div>
<div class="t" style="left:18.10px;top:1434.66px;color:#000"><span style="letter-spacing:-0.131px">Puglia</span></div>
<div class="t" style="left:283.70px;top:1434.66px;color:#000"><span style="letter-spacing:-0.209px">Foggia</span></div>
<div class="t" style="left:581.70px;top:1434.66px;color:#000"><span style="letter-spacing:0.655px">31.9 km</span></div>
<div class="t" style="left:833.40px;top:1434.66px;color:#000"><span style="letter-spacing:-0.059px">Vico del Gargano</span></div>
<div class="t" style="left:1306.50px;top:1434.66px;color:#000"><span style="letter-spacing:0.200px">7766</span></div>
<div class="t" style="left:18.10px;top:1475.66px;color:#000"><span style="letter-spacing:-0.131px">Puglia</span></div>
<div class="t" style="left:283.70px;top:1475.66px;color:#000"><span style="letter-spacing:-0.209px">Foggia</span></div>
<div class="t" style="left:581.70px;top:1475.66px;color:#000"><span style="letter-spacing:0.655px">33.1 km</span></div>
<div class="t" style="left:832.40px;top:1475.66px;color:#000"><span style="letter-spacing:0.016px">Cagnano Varano</span></div>
<div class="t" style="left:1306.50px;top:1475.66px;color:#000"><span style="letter-spacing:0.436px">7330</span></div>
<div class="t" style="left:18.10px;top:1516.66px;color:#000"><span style="letter-spacing:-0.131px">Puglia</span></div>
<div class="t" style="left:283.70px;top:1516.66px;color:#000"><span style="letter-spacing:-0.209px">Foggia</span></div>
<div class="t" style="left:582.70px;top:1516.66px;color:#000"><span style="letter-spacing:0.488px">41.7 km</span></div>
<div class="t" style="left:831.40px;top:1516.66px;color:#000"><span style="letter-spacing:-0.080px">Lesina</span></div>
<div class="t" style="left:1306.50px;top:1516.66px;color:#000"><span style="letter-spacing:0.200px">6410</span></div>
<div class="t" style="left:18.10px;top:1557.66px;color:#000"><span style="letter-spacing:-0.131px">Puglia</span></div>
<div class="t" style="left:283.70px;top:1557.66px;color:#000"><span style="letter-spacing:-0.209px">Foggia</span></div>
<div class="t" style="left:581.70px;top:1557.66px;color:#000"><span style="letter-spacing:0.655px">31.4 km</span></div>
<div class="t" style="left:831.40px;top:1557.66px;color:#000"><span style="letter-spacing:0.679px">Peschici</span></div>
<div class="t" style="left:1307.50px;top:1557.66px;color:#000"><span style="letter-spacing:0.200px">4521</span></div>
<div class="t" style="left:18.10px;top:1598.66px;color:#000"><span style="letter-spacing:-0.131px">Puglia</span></div>
<div class="t" style="left:283.70px;top:1598.66px;color:#000"><span style="letter-spacing:-0.209px">Foggia</span></div>
<div class="t" style="left:581.70px;top:1598.66px;color:#000"><span style="letter-spacing:0.655px">28.6 km</span></div>
<div class="t" style="left:831.40px;top:1598.66px;color:#000"><span style="letter-spacing:0.511px">Ischitella</span></div>
<div class="t" style="left:1307.50px;top:1598.66px;color:#000"><span style="letter-spacing:0.200px">4432</span></div>
<div class="t" style="left:18.10px;top:1639.66px;color:#000"><span style="letter-spacing:-0.131px">Puglia</span></div>
<div class="t" style="left:283.70px;top:1639.66px;color:#000"><span style="letter-spacing:-0.209px">Foggia</span></div>
<div class="t" style="left:581.70px;top:1639.66px;color:#000"><span style="letter-spacing:0.655px">28.1 km</span></div>
<div class="t" style="left:831.40px;top:1639.66px;color:#000"><span style="letter-spacing:0.200px">Rodi Garganico</span></div>
<div class="t" style="left:1306.50px;top:1639.66px;color:#000"><span style="letter-spacing:0.200px">3541</span></div>
</body></html>
